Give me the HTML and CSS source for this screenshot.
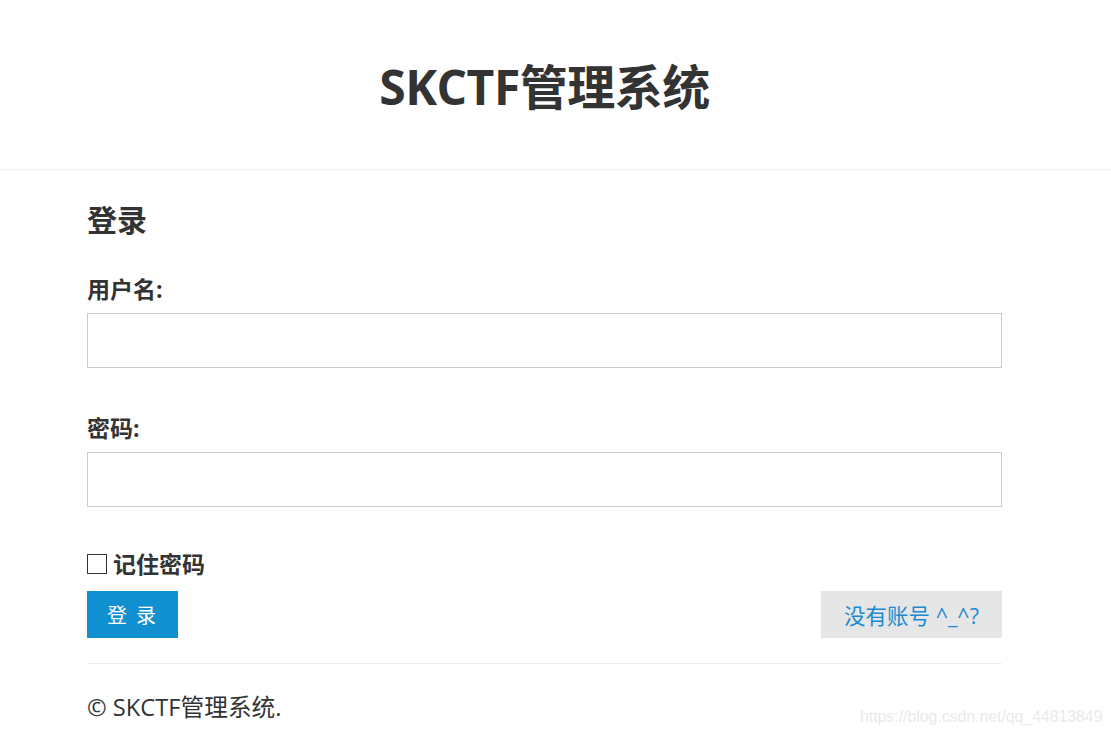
FILE: index.html
```html
<!DOCTYPE html>
<html lang="zh-CN">
<head>
    <meta charset="UTF-8">
    <title>SKCTF管理系统</title>
    <link rel="stylesheet" href="styles.css">
</head>
<body>

    <div class="header">
        <h1>SKCTF管理系统</h1>
    </div>

    <div class="container">
        <h2>登录</h2>
        <form class="login-form">
            <label for="username">用户名:</label>
            <input type="text" id="username" name="username">

            <label for="password">密码:</label>
            <input type="password" id="password" name="password">

            <label class="remember"><span class="box"></span>记住密码</label>

            <div class="actions">
                <button type="submit" class="btn-login">登 录</button>
                <a href="#" class="btn-register">没有账号 ^_^?</a>
            </div>
        </form>

        <div class="footer">
            © SKCTF管理系统.
        </div>
    </div>

    <div class="watermark">https://blog.csdn.net/qq_44813849</div>

</body>
</html>
```

FILE: styles.css
```css
body {
    font-family: "Open Sans", "Noto Sans CJK SC", sans-serif;
    margin: 0;
    padding: 0;
    background-color: #fff;
    color: #333;
}

.header {
    text-align: center;
    border-bottom: 1px solid #eee;
    height: 170px;
    display: flex;
    align-items: center;
    justify-content: center;
    padding-right: 22px;
    box-sizing: border-box;
}

.header h1 {
    font-size: 48px;
    font-weight: bold;
    letter-spacing: -0.5px;
    margin: 0 0 2px;
}

.container {
    width: 915px;
    margin: 0 0 0 87px;
}

.container h2 {
    font-size: 30px;
    font-weight: bold;
    margin: 30px 0 0;
    line-height: 40px;
}

.login-form label {
    display: block;
    font-size: 23px;
    font-weight: bold;
    line-height: 32px;
    margin-bottom: 8px;
}

.login-form label[for="username"] {
    margin-top: 33px;
}

.login-form label[for="password"] {
    margin-top: 44px;
}

.login-form input {
    display: block;
    width: 100%;
    height: 55px;
    box-sizing: border-box;
    border: 1px solid #ccc;
    margin: 0;
    font-size: 18px;
    padding: 0 10px;
}

.login-form .remember {
    display: flex;
    align-items: center;
    margin: 41px 0 0;
}

.remember .box {
    width: 18px;
    height: 18px;
    border: 1px solid #333;
    margin: 0 6px 0 0;
}

.actions {
    display: flex;
    justify-content: space-between;
    margin-top: 11px;
    padding-bottom: 25px;
    border-bottom: 1px solid #eee;
}

.btn-login {
    width: 91px;
    height: 47px;
    background-color: #1190d1;
    color: #fff;
    border: none;
    font-family: inherit;
    font-size: 20px;
    letter-spacing: 2px;
    cursor: pointer;
}

.btn-register {
    width: 181px;
    height: 47px;
    background-color: #e6e6e6;
    color: #1a8bd0;
    text-decoration: none;
    font-size: 21.5px;
    display: flex;
    align-items: center;
    justify-content: center;
}

.footer {
    font-size: 23.7px;
    margin-top: 25px;
    line-height: 36px;
}

.watermark {
    position: absolute;
    left: 860px;
    top: 708px;
    font-family: "Liberation Sans", Arial, sans-serif;
    font-size: 15.8px;
    color: #eaeaea;
}
```
